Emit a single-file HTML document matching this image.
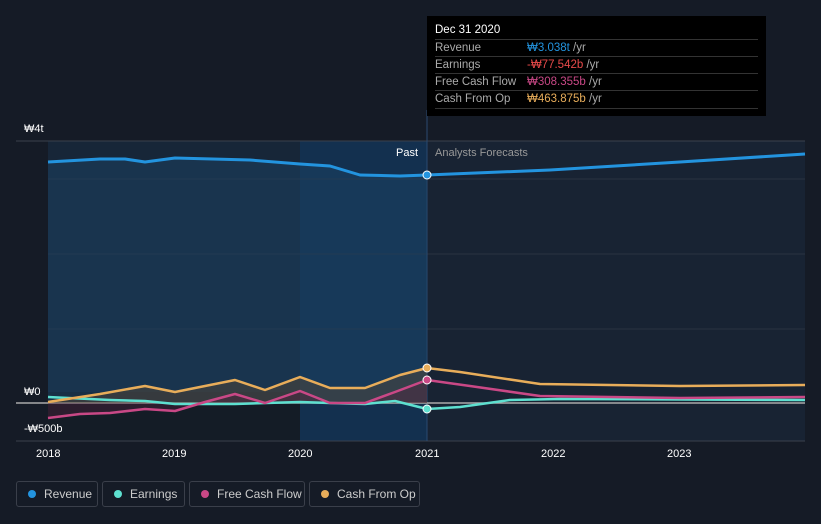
<!DOCTYPE html><html><head><style>
body{margin:0;background:#151b26;font-family:"Liberation Sans",sans-serif;}
.wrap{position:relative;width:821px;height:524px;overflow:hidden;background:#151b26}
.tt{position:absolute;left:427px;top:16px;width:339px;height:100px;background:#000;color:#ddd;font-size:11.5px}
.tt .h{position:absolute;left:8px;top:8px;color:#fff;font-size:11.5px}
.row{position:absolute;left:8px;width:323px;border-top:1px solid #333;height:17px;line-height:17px;color:#aaa;white-space:nowrap}
.row span{position:absolute;left:92px;color:#aaa}
.leg{position:absolute;top:481px;height:26px;border:1px solid #3a3f4a;border-radius:3px;color:#ccc;font-size:12px;line-height:25px;box-sizing:border-box;padding-left:27px;white-space:nowrap}
.leg i{position:absolute;left:11px;top:8px;width:8px;height:8px;border-radius:50%}
.ax{position:absolute;color:#fff;font-size:11px}
</style></head><body><div class="wrap">
<svg width="821" height="524" style="position:absolute;left:0;top:0">
<rect x="48" y="141" width="379" height="300" fill="#172638"/>
<rect x="300" y="141" width="127" height="300" fill="#13304f"/>
<rect x="48" y="392" width="252" height="49" fill="#14181f" opacity="0.7"/>
<rect x="427" y="141" width="378" height="300" fill="#182333"/>
<line x1="48" y1="179" x2="805" y2="179" stroke="#2a3342"/>
<line x1="48" y1="254" x2="805" y2="254" stroke="#2a3342"/>
<line x1="48" y1="329" x2="805" y2="329" stroke="#2a3342"/>
<line x1="16" y1="141" x2="805" y2="141" stroke="#3a404c"/>
<line x1="16" y1="441" x2="805" y2="441" stroke="#3a404c"/>
<line x1="427" y1="110" x2="427" y2="441" stroke="#2a4a70"/>
<polygon fill="#1b4264" opacity="0.5" points="48,162 100,159 125,159 145,162 175,158 250,160 300,164 330,166 360,175 400,176 427,175 427,403 48,403"/>
<polyline fill="none" stroke="#2394df" stroke-width="3" stroke-linejoin="round" points="48,162 100,159 125,159 145,162 175,158 250,160 300,164 330,166 360,175 400,176 427,175 550,170 680,162 805,154"/>
<line x1="16" y1="403" x2="805" y2="403" stroke="#aaa" stroke-width="1.5"/>
<polygon fill="#5a4a35" opacity="0.45" points="48,402 100,394 145,386 175,392 210,385 235,380 265,390 300,377 330,388 365,388 400,375 427,368 427,403 48,403"/>
<polygon fill="#5a2040" opacity="0.35" points="48,418 80,414 110,413 145,409 175,411 205,402 235,394 265,403 300,391 330,403 365,403 395,392 427,380 427,403 48,403"/>
<polyline fill="none" stroke="#5ee0d0" stroke-width="2.5" stroke-linejoin="round" points="48,397 110,400 145,401 175,404 235,404 300,402 330,403 365,404 395,401 427,409 460,407 510,400 560,399 805,400"/>
<polyline fill="none" stroke="#c94886" stroke-width="2.5" stroke-linejoin="round" points="48,418 80,414 110,413 145,409 175,411 205,402 235,394 265,403 300,391 330,403 365,403 395,392 427,380 470,386 540,396 680,398 805,397"/>
<polyline fill="none" stroke="#e8ad5a" stroke-width="2.5" stroke-linejoin="round" points="48,402 100,394 145,386 175,392 210,385 235,380 265,390 300,377 330,388 365,388 400,375 427,368 460,372 540,384 680,386 805,385"/>
<circle cx="427" cy="175" r="4" fill="#2394df" stroke="#fff"/>
<circle cx="427" cy="368" r="4" fill="#e8ad5a" stroke="#fff"/>
<circle cx="427" cy="380" r="4" fill="#c94886" stroke="#fff"/>
<circle cx="427" cy="409" r="4" fill="#5ee0d0" stroke="#fff"/>
</svg>
<div class="ax" style="left:24px;top:123px">₩4t</div>
<div class="ax" style="left:24px;top:386px">₩0</div>
<div class="ax" style="left:24px;top:423px">-₩500b</div>
<div class="ax" style="left:396px;top:147px">Past</div>
<div class="ax" style="left:435px;top:147px;color:#999">Analysts Forecasts</div>
<div class="ax" style="left:36px;top:448px">2018</div>
<div class="ax" style="left:162px;top:448px">2019</div>
<div class="ax" style="left:288px;top:448px">2020</div>
<div class="ax" style="left:415px;top:448px">2021</div>
<div class="ax" style="left:541px;top:448px">2022</div>
<div class="ax" style="left:667px;top:448px">2023</div>
<div class="tt"><div class="h">Dec 31 2020</div>
<div class="row" style="top:23px">Revenue<span><b style="font-weight:normal;color:#2394df">₩3.038t</b> /yr</span></div>
<div class="row" style="top:40px">Earnings<span><b style="font-weight:normal;color:#e84a4a">-₩77.542b</b> /yr</span></div>
<div class="row" style="top:57px">Free Cash Flow<span><b style="font-weight:normal;color:#c94886">₩308.355b</b> /yr</span></div>
<div class="row" style="top:74px;border-bottom:1px solid #333">Cash From Op<span><b style="font-weight:normal;color:#e8ad5a">₩463.875b</b> /yr</span></div>
</div>
<div class="leg" style="left:16px;width:82px"><i style="background:#2394df"></i>Revenue</div>
<div class="leg" style="left:102px;width:83px"><i style="background:#5ee0d0"></i>Earnings</div>
<div class="leg" style="left:189px;width:116px"><i style="background:#c94886"></i>Free Cash Flow</div>
<div class="leg" style="left:309px;width:111px"><i style="background:#e8ad5a"></i>Cash From Op</div>
</div></body></html>
